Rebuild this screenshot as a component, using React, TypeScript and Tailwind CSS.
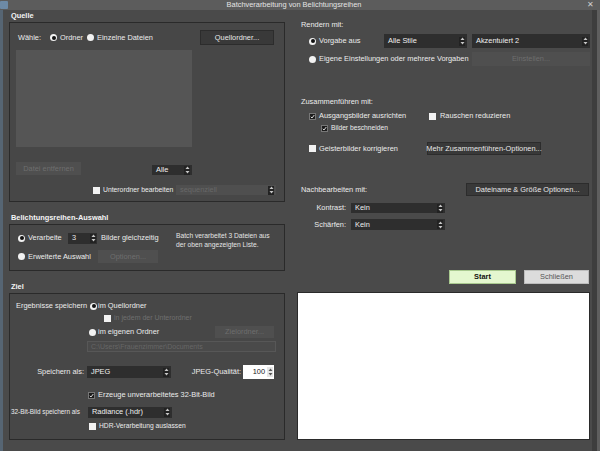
import React from "react";

const Spin = ({ light = false }: { light?: boolean }) => (
  <svg width="5" height="8" viewBox="0 0 5 8" className="shrink-0">
    <path d="M2.5 0.5 L4.5 3 L0.5 3 Z" fill={light ? "#555" : "#c8c8c8"} />
    <path d="M2.5 7.5 L4.5 5 L0.5 5 Z" fill={light ? "#555" : "#c8c8c8"} />
  </svg>
);

const Radio = ({ on = false }: { on?: boolean }) => (
  <span className="w-[7px] h-[7px] rounded-full bg-[#f2f2f2] flex items-center justify-center shrink-0">
    {on && <span className="w-[4px] h-[4px] rounded-full bg-[#111]" />}
  </span>
);

const Check = ({ on = false }: { on?: boolean }) =>
  on ? (
    <span className="w-[7px] h-[7px] bg-[#1c1c1c] border border-[#777] flex items-center justify-center shrink-0">
      <svg width="5" height="5" viewBox="0 0 5 5">
        <path d="M0.8 2.8 L2 4 L4.3 1" stroke="#eee" strokeWidth="0.9" fill="none" />
      </svg>
    </span>
  ) : (
    <span className="w-[7px] h-[7px] bg-[#f2f2f2] shrink-0" />
  );

const Select = ({ text, w, h = "h-[12px]", disabled = false }: { text: string; w: string; h?: string; disabled?: boolean }) => (
  <div className={`${w} ${h} ${disabled ? "bg-[#4f4f4f] text-[#686868]" : "bg-[#2e2e2e] text-[#f0f0f0]"} flex items-center pl-[4px] pr-[2px] shrink-0`}>
    <span className="flex-1">{text}</span>
    <span className="w-[6px] h-[9px] bg-[#222] flex items-center justify-center">
      <Spin />
    </span>
  </div>
);

const Btn = ({ text, w, h = "h-[13px]" }: { text: string; w: string; h?: string }) => (
  <div className={`${w} ${h} bg-[#393939] border border-[#2c2c2c] text-[#e8e8e8] flex items-center justify-center shrink-0`}>
    {text}
  </div>
);

const DBtn = ({ text, w, h = "h-[13px]" }: { text: string; w: string; h?: string }) => (
  <div className={`${w} ${h} bg-[#4f4f4f] text-[#6e6e6e] flex items-center justify-center shrink-0`}>
    {text}
  </div>
);

export default function App() {
  return (
    <div className="w-[600px] h-[451px] bg-[#4a4a4a] flex flex-col overflow-hidden whitespace-nowrap text-[7.4px] leading-[10px] text-[#ececec] font-['Liberation_Sans',Arial,sans-serif]">
      {/* title bar */}
      <div className="h-[10px] bg-[#5c5c5c] flex items-center shrink-0">
        <div className="w-[8px] h-[8px] bg-[#6d8aa6] rounded-[1px]" />
        <div className="flex-1 text-center text-[#e4e4e4] leading-[10px]">Batchverarbeitung von Belichtungsreihen</div>
        <div className="w-[20px] text-center text-[#cfcfcf] text-[8px] leading-[10px]">✕</div>
      </div>
      <div className="flex flex-1">
        <div className="w-[3px] bg-[#566573] shrink-0" />
        {/* left column */}
        <div className="ml-[6px] w-[276px] flex flex-col">
          <div className="h-[12px] pl-[2px] font-bold leading-[12px] text-[#f4f4f4]">Quelle</div>
          <div className="h-[180px] border border-[#2a2a2a] bg-[#474747] flex flex-col">
            <div className="mt-[7px] h-[15px] flex items-center pl-[8px] pr-[10px]">
              <span className="w-[32px]">Wähle:</span>
              <Radio on />
              <span className="ml-[3px] w-[27px]">Ordner</span>
              <Radio />
              <span className="ml-[3px]">Einzelne Dateien</span>
              <div className="ml-auto">
                <Btn text="Quellordner..." w="w-[74px]" h="h-[15px]" />
              </div>
            </div>
            <div className="mt-[5px] ml-[6px] w-[176px] h-[97px] bg-[#555555]" />
            <div className="mt-[15px] ml-[6px] w-[176px] flex items-end justify-between">
              <DBtn text="Datei entfernen" w="w-[65px]" />
              <Select text="Alle" w="w-[40px]" h="h-[10px]" />
            </div>
            <div className="mt-[10px] flex items-center h-[10px] pl-[83px]">
              <Check />
              <span className="ml-[3px] w-[73px] text-[6.8px]">Unterordner bearbeiten</span>
              <Select text="sequenziell" w="w-[100px]" h="h-[10px]" disabled />
            </div>
          </div>
          <div className="mt-[10px] h-[12px] pl-[2px] font-bold leading-[12px] text-[#f4f4f4]">Belichtungsreihen-Auswahl</div>
          <div className="h-[47px] border border-[#2a2a2a] bg-[#474747] flex">
            <div className="w-[166px] flex flex-col pl-[8px]">
              <div className="mt-[7px] h-[12px] flex items-center">
                <Radio on />
                <span className="ml-[3px] w-[40px]">Verarbeite</span>
                <div className="w-[29px] h-[11px] bg-[#2e2e2e] flex items-center pl-[4px] pr-[1px]">
                  <span className="flex-1">3</span>
                  <span className="w-[6px] h-[9px] bg-[#222] flex items-center justify-center">
                    <Spin />
                  </span>
                </div>
                <span className="ml-[4px]">Bilder gleichzeitig</span>
              </div>
              <div className="mt-[6px] h-[13px] flex items-center">
                <Radio />
                <span className="ml-[3px] w-[70px]">Erweiterte Auswahl</span>
                <DBtn text="Optionen..." w="w-[60px]" />
              </div>
            </div>
            <div className="mt-[6px] text-[6.7px] leading-[9px] text-[#e4e4e4]">
              <div>Batch verarbeitet 3 Dateien aus</div>
              <div>der oben angezeigten Liste.</div>
            </div>
          </div>
          <div className="mt-[10px] h-[12px] pl-[2px] font-bold leading-[12px] text-[#f4f4f4]">Ziel</div>
          <div className="h-[147px] border border-[#2a2a2a] bg-[#474747] flex flex-col">
            <div className="mt-[6px] h-[12px] flex items-center pl-[6px]">
              <span className="w-[74px]">Ergebnisse speichern</span>
              <Radio on />
              <span className="ml-[1px]">im Quellordner</span>
            </div>
            <div className="h-[12px] flex items-center pl-[94px]">
              <Check />
              <span className="ml-[3px] text-[7px] text-[#6f6f6f]">in jedem der Unterordner</span>
            </div>
            <div className="mt-[1px] h-[14px] flex items-center pl-[79px] pr-[10px]">
              <Radio />
              <span className="ml-[2px]">im eigenen Ordner</span>
              <div className="ml-auto">
                <DBtn text="Zielordner..." w="w-[59px]" h="h-[12px]" />
              </div>
            </div>
            <div className="mt-[2px] ml-[77px] w-[189px] h-[11px] border border-[#575757] bg-[#4a4a4a] text-[#666] pl-[3px] flex items-center text-[7px]">
              C:\Users\Frauenzimmer\Documents
            </div>
            <div className="mt-[13px] h-[14px] flex items-center pr-[10px]">
              <span className="w-[74px] text-right">Speichern als:</span>
              <div className="ml-[3px]">
                <Select text="JPEG" w="w-[84px]" h="h-[12px]" />
              </div>
              <span className="ml-auto mr-[2px]">JPEG-Qualität:</span>
              <div className="w-[31px] h-[14px] bg-white text-[#222] flex items-center justify-end pr-[1px]">
                <span className="mr-[2px]">100</span>
                <span className="w-[6px] h-[10px] bg-[#e6e6e6] flex items-center justify-center">
                  <Spin light />
                </span>
              </div>
            </div>
            <div className="mt-[10px] h-[12px] flex items-center pl-[78px]">
              <Check on />
              <span className="ml-[3px]">Erzeuge unverarbeitetes 32-Bit-Bild</span>
            </div>
            <div className="mt-[5px] h-[12px] flex items-center pl-[1px]">
              <span className="w-[77px] text-[6.4px]">32-Bit-Bild speichern als</span>
              <Select text="Radiance (.hdr)" w="w-[84px]" h="h-[11px]" />
            </div>
            <div className="mt-[2px] h-[12px] flex items-center pl-[79px]">
              <Check />
              <span className="ml-[3px] text-[6.7px]">HDR-Verarbeitung auslassen</span>
            </div>
          </div>
        </div>
        {/* right column */}
        <div className="ml-[12px] w-[293px] flex flex-col">
          <div className="mt-[9px] h-[12px] leading-[12px] pl-[4px]">Rendern mit:</div>
          <div className="mt-[3px] h-[14px] flex items-center pl-[12px]">
            <Radio on />
            <span className="ml-[3px] w-[65px]">Vorgabe aus</span>
            <Select text="Alle Stile" w="w-[83px]" h="h-[14px]" />
            <div className="ml-[5px]">
              <Select text="Akzentuiert 2" w="w-[118px]" h="h-[14px]" />
            </div>
          </div>
          <div className="mt-[4px] h-[14px] flex items-center pl-[12px]">
            <Radio />
            <span className="ml-[3px] w-[153px]">Eigene Einstellungen oder mehrere Vorgaben</span>
            <DBtn text="Einstellen..." w="w-[118px]" h="h-[14px]" />
          </div>
          <div className="mt-[30px] h-[12px] leading-[12px] pl-[4px]">Zusammenführen mit:</div>
          <div className="mt-[2px] h-[12px] flex items-center pl-[12px]">
            <Check on />
            <span className="ml-[3px] w-[110px]">Ausgangsbilder ausrichten</span>
            <Check />
            <span className="ml-[4px]">Rauschen reduzieren</span>
          </div>
          <div className="h-[12px] flex items-center pl-[24px]">
            <Check on />
            <span className="ml-[3px] text-[6.7px]">Bilder beschneiden</span>
          </div>
          <div className="mt-[8px] h-[13px] flex items-center pl-[12px]">
            <Check />
            <span className="ml-[3px] w-[108px]">Geisterbilder korrigieren</span>
            <Btn text="Mehr Zusammenführen-Optionen..." w="w-[114px]" h="h-[13px]" />
          </div>
          <div className="mt-[28px] h-[13px] flex items-center pl-[4px] pr-[1px]">
            <span>Nachbearbeiten mit:</span>
            <div className="ml-auto">
              <Btn text="Dateiname & Größe Optionen..." w="w-[123px]" h="h-[13px]" />
            </div>
          </div>
          <div className="mt-[7px] h-[10px] flex items-center">
            <span className="w-[49px] text-right">Kontrast:</span>
            <div className="ml-[5px]">
              <Select text="Kein" w="w-[94px]" h="h-[10px]" />
            </div>
          </div>
          <div className="mt-[6px] h-[11px] flex items-center">
            <span className="w-[49px] text-right">Schärfen:</span>
            <div className="ml-[5px]">
              <Select text="Kein" w="w-[94px]" h="h-[11px]" />
            </div>
          </div>
          <div className="mt-[40px] h-[14px] flex items-center justify-end pr-[1px]">
            <div className="w-[67px] h-[14px] bg-[#e4f7cf] border border-[#a9c98f] text-[#111] font-bold flex items-center justify-center">Start</div>
            <div className="ml-[8px] w-[65px] h-[14px] bg-[#dcdcdc] border border-[#bdbdbd] text-[#555] flex items-center justify-center">Schließen</div>
          </div>
          <div className="mt-[8px] h-[148px] bg-white border border-[#2a2a2a]" />
        </div>
        <div className="ml-[2px] w-[5px] bg-[#3d3d3d]" />
        <div className="w-[3px] bg-[#5e5e5e]" />
      </div>
    </div>
  );
}
